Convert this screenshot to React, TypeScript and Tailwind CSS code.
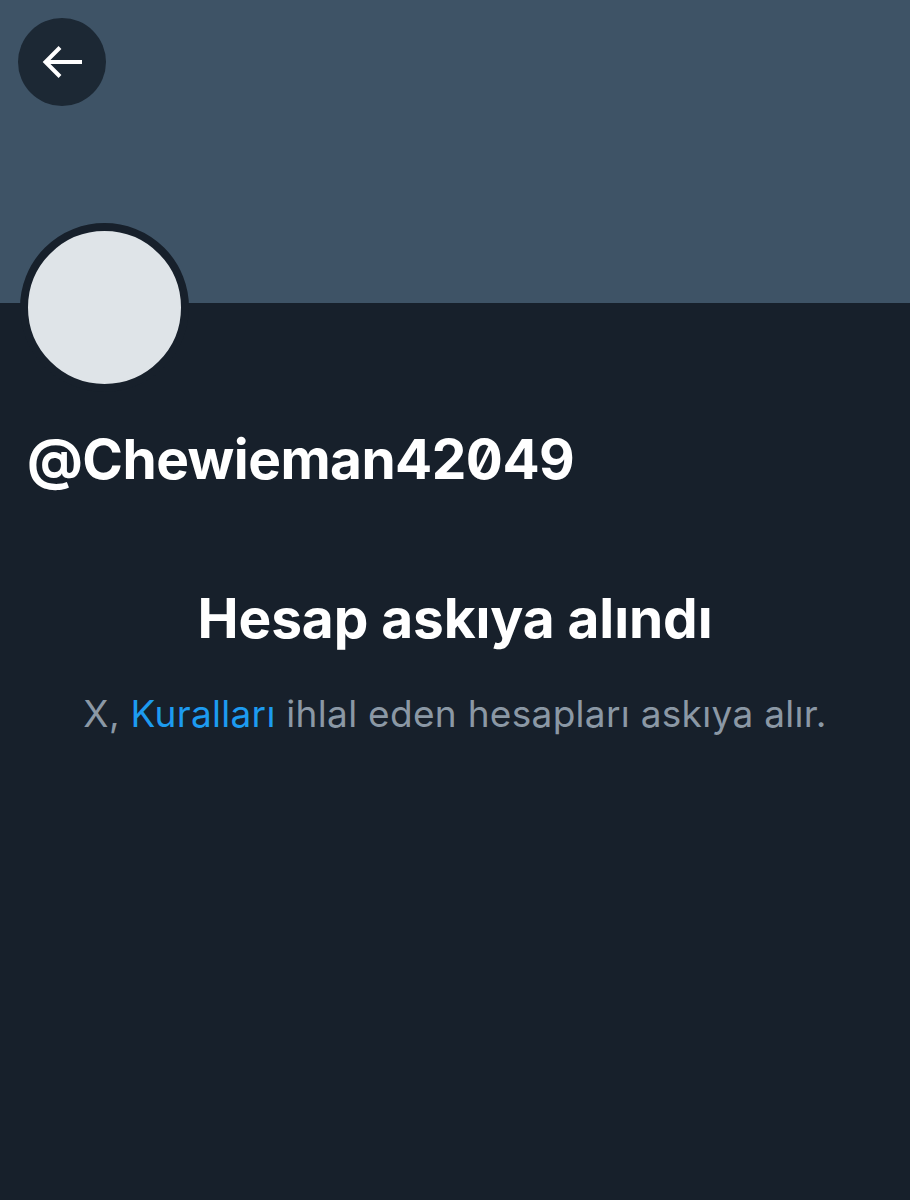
export default function App() {
  return (
    <div className="min-h-[1200px] w-full bg-[#17202b] font-['Inter',sans-serif]">
      {/* Banner */}
      <div className="h-[303px] bg-[#3e5366] pt-[18px] pl-[18px]">
        <button className="flex h-[88px] w-[88px] items-center justify-center rounded-full bg-[#1c2834]">
          <svg className="h-[88px] w-[88px]" viewBox="0 0 88 88" fill="none" stroke="white" strokeWidth={4}>
            <path d="M28 44H64" />
            <path d="M42 29.5L27.5 44L42 58.5" strokeLinejoin="miter" />
          </svg>
        </button>
      </div>

      {/* Avatar */}
      <div className="-mt-[80px] pl-[20px]">
        <div className="h-[169px] w-[169px] rounded-full border-[8px] border-[#17202b] bg-[#dfe4e8]" />
      </div>

      <div className="px-[27px] pt-[37px]">
        <h1 className="text-[55px] leading-[60px] font-bold tracking-[-0.55px] text-white [font-feature-settings:'zero']">
          @Chewieman42049
        </h1>
      </div>

      <div className="flex flex-col items-center pt-[97px] text-center">
        <h2 className="text-[55px] leading-[64px] font-bold tracking-[-0.1px] text-white">
          Hesap askıya alındı
        </h2>
        <p className="mt-[42px] text-[37px] leading-[44px] tracking-[0.3px] text-[#8b98a5]">
          X, <span className="text-[#1d9bf0]">Kuralları</span> ihlal eden hesapları askıya alır.
        </p>
      </div>
    </div>
  );
}
